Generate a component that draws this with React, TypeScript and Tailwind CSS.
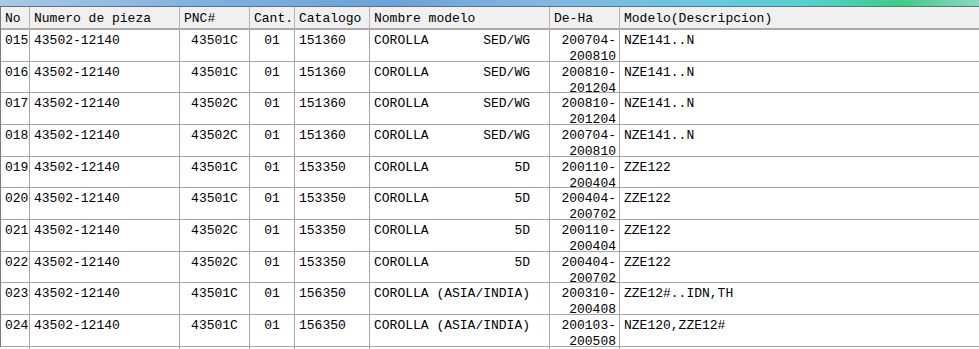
import React from "react";

const rows = [
  ["015", "43502-12140", "43501C", "01", "151360", "COROLLA       SED/WG", "200704-200810", "NZE141..N"],
  ["016", "43502-12140", "43501C", "01", "151360", "COROLLA       SED/WG", "200810-201204", "NZE141..N"],
  ["017", "43502-12140", "43502C", "01", "151360", "COROLLA       SED/WG", "200810-201204", "NZE141..N"],
  ["018", "43502-12140", "43502C", "01", "151360", "COROLLA       SED/WG", "200704-200810", "NZE141..N"],
  ["019", "43502-12140", "43501C", "01", "153350", "COROLLA           5D", "200110-200404", "ZZE122"],
  ["020", "43502-12140", "43501C", "01", "153350", "COROLLA           5D", "200404-200702", "ZZE122"],
  ["021", "43502-12140", "43502C", "01", "153350", "COROLLA           5D", "200110-200404", "ZZE122"],
  ["022", "43502-12140", "43502C", "01", "153350", "COROLLA           5D", "200404-200702", "ZZE122"],
  ["023", "43502-12140", "43501C", "01", "156350", "COROLLA (ASIA/INDIA)", "200310-200408", "ZZE12#..IDN,TH"],
  ["024", "43502-12140", "43501C", "01", "156350", "COROLLA (ASIA/INDIA)", "200103-200508", "NZE120,ZZE12#"],
];

const headers = ["No", "Numero de pieza", "PNC#", "Cant.", "Catalogo", "Nombre modelo", "De-Ha", "Modelo(Descripcion)"];

const grid = "grid grid-cols-[29px_150px_70px_45px_75px_180px_70px_1fr]";

export default function App() {
  return (
    <div
      className="w-[979px] h-[349px] overflow-hidden bg-white text-[13px] text-[#000]"
      style={{ fontFamily: '"Liberation Mono", monospace' }}
    >
      <div className="h-[6px] bg-[linear-gradient(90deg,#a9c9e6_0%,#7fb2e0_20%,#6aa3da_40%,#82b6e2_55%,#6cc6e2_72%,#56d2cf_82%,#3fcb8a_92%,#8fd6c0_100%)]" />
      <div className="border-t border-[#6e6e6e] border-l border-l-[#7a7a7a]">
        <div className={`${grid} h-[23px] bg-[#f0f0f0] border-b-2 border-[#a9a9a9]`}>
          {headers.map((h, i) => (
            <div
              key={i}
              className={`pl-[4px] pt-[1px] leading-[22px] whitespace-pre ${i < 7 ? "border-r border-[#b4b4b4]" : ""}`}
            >
              {h}
            </div>
          ))}
        </div>
        {rows.map((r, ri) => (
          <div key={ri} className={`${grid} h-[31.67px] border-b border-[#a6a6a6]`}>
            <div className="border-r border-[#a6a6a6] pl-[4px] pt-[3px] leading-[16px]">{r[0]}</div>
            <div className="border-r border-[#a6a6a6] pl-[4px] pt-[3px] leading-[16px]">{r[1]}</div>
            <div className="border-r border-[#a6a6a6] pt-[3px] leading-[16px] text-center">{r[2]}</div>
            <div className="border-r border-[#a6a6a6] pt-[3px] leading-[16px] text-center">{r[3]}</div>
            <div className="border-r border-[#a6a6a6] pl-[4px] pt-[3px] leading-[16px]">{r[4]}</div>
            <div className="border-r border-[#a6a6a6] pl-[4px] pt-[3px] leading-[16px] whitespace-pre">{r[5]}</div>
            <div className="border-r border-[#a6a6a6] pr-[3px] pt-[3px] leading-[16px] text-right">
              <div>{r[6].slice(0, 7)}</div>
              <div>{r[6].slice(7)}</div>
            </div>
            <div className="pl-[4px] pt-[3px] leading-[16px]">{r[7]}</div>
          </div>
        ))}
      </div>
    </div>
  );
}
